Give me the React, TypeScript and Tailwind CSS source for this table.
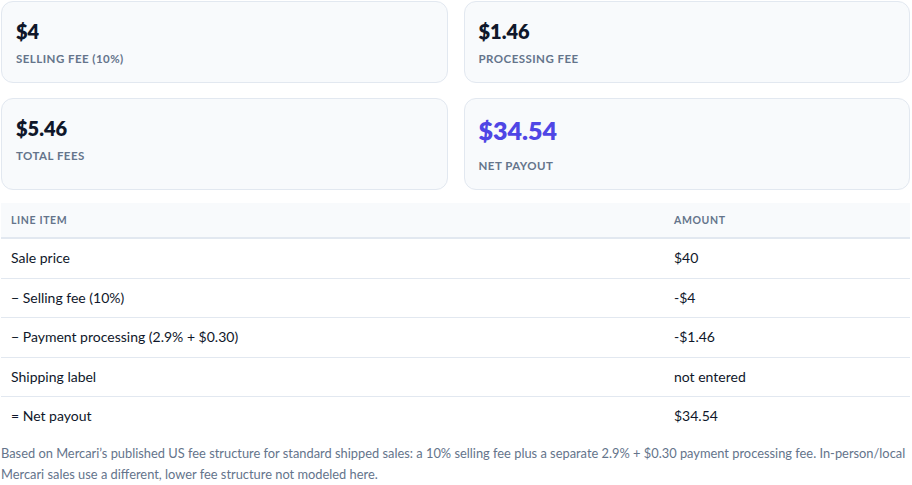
import React from "react";

const stats = [
  { value: "$4", label: "Selling fee (10%)" },
  { value: "$1.46", label: "Processing fee" },
  { value: "$5.46", label: "Total fees" },
  { value: "$34.54", label: "Net payout", highlight: true },
];

const rows = [
  { item: "Sale price", amount: "$40" },
  { item: "\u2212 Selling fee (10%)", amount: "-$4" },
  { item: "\u2212 Payment processing (2.9% + $0.30)", amount: "-$1.46" },
  { item: "Shipping label", amount: "not entered" },
  { item: "= Net payout", amount: "$34.54" },
];

const App: React.FC = () => {
  return (
    <div
      className="min-h-[485px] bg-white text-[#0f172a]"
      style={{ fontFamily: "Lato, 'Open Sans', sans-serif" }}
    >
      <div className="ml-[1px] w-[909px] pt-[1px]">
        {/* summary cards */}
        <div className="grid grid-cols-2 gap-x-4 gap-y-[15px]">
          {stats.map((s) => (
            <div
              key={s.label}
              className="rounded-xl border border-[#e2e8f0] bg-[#f8fafc] px-[14px] py-[15px]"
            >
              {s.highlight ? (
                <div className="text-[25px] font-extrabold leading-8 text-[#4f46e5]">
                  {s.value}
                </div>
              ) : (
                <div className="text-[20px] font-extrabold leading-7 text-[#0f172a]">
                  {s.value}
                </div>
              )}
              <div
                className={
                  s.highlight
                    ? "mt-3 text-[11.5px] font-bold uppercase leading-4 tracking-[0.04em] text-[#64748b]"
                    : "mt-[6px] text-[11.5px] font-bold uppercase leading-4 tracking-[0.04em] text-[#64748b]"
                }
              >
                {s.label}
              </div>
            </div>
          ))}
        </div>

        {/* breakdown table */}
        <div className="mt-[13px]">
          <div className="grid grid-cols-[663px_1fr] border-b-2 border-[#e2e8f0] bg-[#f8fafc] text-[10.5px] font-bold uppercase leading-4 tracking-[0.06em] text-[#64748b]">
            <div className="px-[10px] py-[9px]">Line item</div>
            <div className="px-[10px] py-[9px]">Amount</div>
          </div>
          {rows.map((r, i) => (
            <div
              key={r.item}
              className={
                i < rows.length - 1
                  ? "grid grid-cols-[663px_1fr] border-b border-[#e2e8f0] text-[14px] leading-5"
                  : "grid grid-cols-[663px_1fr] text-[14px] leading-5"
              }
            >
              <div className="px-[10px] py-[9.25px]">{r.item}</div>
              <div className="px-[10px] py-[9.25px]">{r.amount}</div>
            </div>
          ))}
        </div>

        <p className="mt-[7px] text-[12.85px] leading-[21px] text-[#64748b]">
          Based on Mercari&rsquo;s published US fee structure for standard shipped sales: a 10% selling fee plus a
          separate 2.9% + $0.30 payment processing fee. In-person/local Mercari sales use a different, lower fee
          structure not modeled here.
        </p>
      </div>
    </div>
  );
};

export default App;
